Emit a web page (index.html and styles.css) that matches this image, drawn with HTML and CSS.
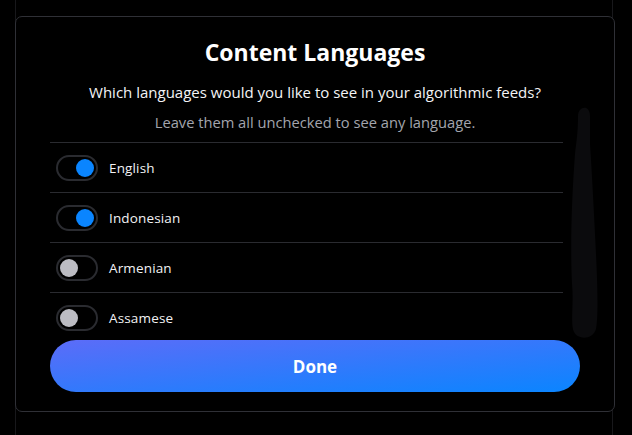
FILE: index.html
```html
<!DOCTYPE html>
<html lang="en">
<head>
<meta charset="utf-8">
<title>Content Languages</title>
<link rel="stylesheet" href="styles.css">
</head>
<body>
<div class="page">
  <div class="modal">
    <h1 class="title">Content Languages</h1>
    <p class="subtitle">Which languages would you like to see in your algorithmic feeds?</p>
    <p class="hint">Leave them all unchecked to see any language.</p>
    <div class="list">
      <div class="row"><span class="toggle on"><span class="knob"></span></span><span class="label">English</span></div>
      <div class="row"><span class="toggle on"><span class="knob"></span></span><span class="label">Indonesian</span></div>
      <div class="row"><span class="toggle"><span class="knob"></span></span><span class="label">Armenian</span></div>
      <div class="row"><span class="toggle"><span class="knob"></span></span><span class="label">Assamese</span></div>
    </div>
    <button class="done">Done</button>
  </div>
  <svg class="scrollmark" width="34" height="236" viewBox="0 0 34 236">
    <path d="M10 12 C10 2 22 0 22 12 L22 40 C24 70 26 110 28 150 C30 190 30 215 28 225 C25 236 10 236 6 228 C2 220 6 200 4 180 C2 140 4 90 7 50 C8 40 10 30 10 12 Z" fill="#0b0b0d"/>
  </svg>
</div>
</body>
</html>
```
FILE: styles.css
```css
html, body {
  margin: 0;
  padding: 0;
  background: #000;
}
body {
  font-family: "Open Sans", "Noto Sans", "Liberation Sans", sans-serif;
  color: #fff;
  height: 435px;
  overflow: hidden;
}
.page {
  position: relative;
  margin-left: 15px;
  width: 598px;
  height: 435px;
  border-left: 1px solid #18181b;
  border-right: 1px solid #18181b;
  padding-top: 16px;
  box-sizing: border-box;
}
.modal {
  margin-left: -1px;
  width: 600px;
  box-sizing: border-box;
  border: 1px solid #2f3036;
  border-radius: 7px;
  background: #000;
  padding: 20px 34px 19px 34px;
  display: flex;
  flex-direction: column;
}
.title {
  margin: 0;
  font-size: 23px;
  line-height: 30px;
  font-weight: 700;
  text-align: center;
}
.subtitle {
  margin: 14px 0 0;
  font-size: 15px;
  line-height: 22px;
  text-align: center;
  color: #f4f4f6;
}
.hint {
  margin: 8px 0 0;
  font-size: 14.7px;
  line-height: 22px;
  text-align: center;
  color: #a3a5ad;
}
.list {
  margin-top: 9px;
  width: 513px;
  height: 198px;
  overflow: hidden;
}
.row {
  display: flex;
  align-items: center;
  height: 49px;
  border-top: 1px solid #2a2b30;
  padding-left: 6px;
}
.toggle {
  display: flex;
  align-items: center;
  width: 42px;
  height: 26px;
  box-sizing: border-box;
  border: 2px solid #2a2b30;
  border-radius: 13px;
  padding: 0 2px;
}
.knob {
  width: 18px;
  height: 18px;
  border-radius: 50%;
  background: #bcbcc3;
}
.toggle.on {
  justify-content: flex-end;
}
.toggle.on .knob {
  background: #0a85ff;
}
.label {
  margin-left: 11px;
  font-size: 13.5px;
  letter-spacing: 0.15px;
  color: #f2f2f4;
}
.done {
  height: 52px;
  border: none;
  border-radius: 26px;
  background: linear-gradient(to bottom right, #5c6cf8, #0a85ff);
  color: #fff;
  font-family: inherit;
  font-size: 17px;
  font-weight: 700;
  cursor: pointer;
}
.scrollmark {
  position: absolute;
  left: 552px;
  top: 104px;
}
```
